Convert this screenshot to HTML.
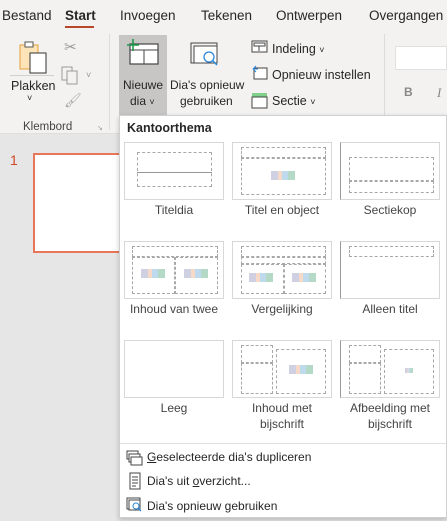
<!DOCTYPE html>
<html><head><meta charset="utf-8"><style>
*{margin:0;padding:0;box-sizing:border-box}
body{width:447px;height:521px;overflow:hidden;background:#e6e6e6;font-family:"Liberation Sans",sans-serif;color:#262626;position:relative;font-size:12px}
.a{position:absolute}
.tab{position:absolute;top:8px;font-size:13.5px;color:#262626}
.ribbon{position:absolute;left:0;top:0;width:447px;height:134px;background:#f3f2f1;border-bottom:1px solid #e1dfdd}
.t{position:absolute;font-size:12px;color:#262626;white-space:nowrap}
.pop{position:absolute;left:119px;top:115px;width:328px;height:403px;background:#fff;border:1px solid #d0d0d0;box-shadow:0 2px 5px rgba(0,0,0,.2)}
.tile{position:absolute;width:100px;height:58px;border:1px solid #d8d8d8;background:#fff}
.d{position:absolute;border:1px dashed #a8a8a8}
.lab{position:absolute;width:108px;text-align:center;font-size:12px;color:#444;line-height:16px}
.mi{position:absolute;left:27px;font-size:12px;color:#262626}
.ic{position:absolute;width:10px;height:6px;background:linear-gradient(90deg,#aac 30%,#eb9 30% 45%,#8bd 45% 70%,#7b9 70%);opacity:.55}
</style></head><body>
<div class="ribbon"></div>
<div class="tab" style="left:2px">Bestand</div>
<div class="tab" style="left:65px;font-weight:bold">Start</div>
<div class="a" style="left:65px;top:26px;width:29px;height:2px;background:#b7472a"></div>
<div class="tab" style="left:120px">Invoegen</div>
<div class="tab" style="left:201px">Tekenen</div>
<div class="tab" style="left:276px">Ontwerpen</div>
<div class="tab" style="left:369px">Overgangen</div>

<svg class="a" style="left:18px;top:40px" width="32" height="34"><rect x="2" y="5" width="18" height="24" fill="#fde3b8" stroke="#e8a040"/><rect x="7" y="2" width="8" height="5" fill="#fff" stroke="#555"/><rect x="12" y="13" width="16" height="20" fill="#fff" stroke="#333"/></svg>
<div class="a" style="left:10px;top:75px;width:44px;height:1px;background:#d0d0d0"></div>
<div class="t" style="left:11px;top:79px;font-size:12.5px">Plakken</div>
<div class="t" style="left:27px;top:93px;font-size:9px">˅</div>
<div class="t" style="left:64px;top:38px;color:#999;font-size:15px">✂</div>
<svg class="a" style="left:61px;top:66px" width="20" height="20"><rect x="1" y="1" width="10" height="13" fill="none" stroke="#999"/><rect x="6" y="5" width="10" height="13" fill="#f3f2f1" stroke="#999"/></svg>
<div class="t" style="left:86px;top:70px;color:#999;font-size:9px">˅</div>
<div class="t" style="left:64px;top:92px;color:#aaa;font-size:14px">🖌</div>
<div class="t" style="left:23px;top:121px;font-size:11.5px;color:#444">Klembord</div>
<div class="t" style="left:97px;top:124px;font-size:7px;color:#999">↘</div>
<div class="a" style="left:109px;top:34px;width:1px;height:96px;background:#dcdcdc"></div>

<div class="a" style="left:119px;top:35px;width:48px;height:80px;background:#c8c6c4"></div>
<svg class="a" style="left:126px;top:38px" width="34" height="28"><rect x="4" y="6" width="28" height="20" fill="#fff" stroke="#444" stroke-width="1.2"/><line x1="4" y1="12" x2="32" y2="12" stroke="#444"/><line x1="18" y1="12" x2="18" y2="26" stroke="#444"/><path d="M7 1v12M1 7h12" stroke="#1e9a4a" stroke-width="1.6"/></svg>
<div class="t" style="left:123px;top:78px;font-size:12px">Nieuwe</div>
<div class="t" style="left:130px;top:94px;font-size:12px">dia <span style="font-size:9px">˅</span></div>
<svg class="a" style="left:190px;top:42px" width="34" height="30"><rect x="1" y="1" width="26" height="20" fill="none" stroke="#444"/><rect x="4" y="4" width="23" height="17" fill="#fff" stroke="#444"/><circle cx="19" cy="15" r="5" fill="#fff" stroke="#2b88d8" stroke-width="1.3"/><line x1="22.5" y1="18.5" x2="27" y2="23" stroke="#2b88d8" stroke-width="1.5"/></svg>
<div class="t" style="left:170px;top:78px;font-size:12px">Dia's opnieuw</div>
<div class="t" style="left:180px;top:94px;font-size:12px">gebruiken</div>
<svg class="a" style="left:251px;top:40px" width="18" height="80"><rect x="1" y="1" width="15" height="11" fill="#fff" stroke="#444"/><rect x="3" y="3" width="11" height="3" fill="none" stroke="#444"/><line x1="8" y1="6" x2="8" y2="11" stroke="#444"/><rect x="3" y="28" width="13" height="11" fill="#fff" stroke="#444"/><path d="M2 29l3-3M2 29l3 3M2 29h5" stroke="#2b88d8" fill="none"/><rect x="1" y="53" width="15" height="4" fill="#7ed08a"/><rect x="1" y="57" width="15" height="11" fill="#fff" stroke="#444"/></svg>
<div class="t" style="left:272px;top:42px;font-size:12.5px">Indeling <span style="font-size:9px">˅</span></div>
<div class="t" style="left:272px;top:68px;font-size:12.5px">Opnieuw instellen</div>
<div class="t" style="left:272px;top:94px;font-size:12.5px">Sectie <span style="font-size:9px">˅</span></div>
<div class="a" style="left:384px;top:34px;width:1px;height:96px;background:#dcdcdc"></div>
<div class="a" style="left:395px;top:46px;width:52px;height:24px;background:#fff;border:1px solid #e0e0e0"></div>
<div class="t" style="left:404px;top:85px;font-weight:bold;color:#888;font-size:12px">B</div>
<div class="t" style="left:437px;top:85px;font-style:italic;color:#888;font-family:'Liberation Serif',serif;font-size:13px">I</div>

<div class="t" style="left:10px;top:152px;color:#d24726;font-size:14px">1</div>
<div class="a" style="left:33px;top:153px;width:100px;height:100px;background:#fff;border:2px solid #e8775a"></div>

<div class="pop">
<div class="t" style="left:7px;top:5px;font-weight:bold;font-size:12.5px">Kantoorthema</div>
<div class="tile" style="left:4px;top:26px"><div class="d" style="left:12px;top:9px;width:75px;height:35px"></div><div class="a" style="left:12px;top:29px;width:75px;height:1px;background:#999"></div></div>
<div class="lab" style="left:0;top:86px">Titeldia</div>
<div class="tile" style="left:112px;top:26px"><div class="d" style="left:8px;top:4px;width:85px;height:11px"></div><div class="d" style="left:8px;top:15px;width:85px;height:37px"></div><div class="ic" style="left:38px;top:28px;width:24px;height:9px"></div></div>
<div class="lab" style="left:108px;top:86px">Titel en object</div>
<div class="tile" style="left:220px;top:26px;border-left-color:#999"><div class="d" style="left:8px;top:14px;width:85px;height:24px"></div><div class="d" style="left:8px;top:38px;width:85px;height:12px"></div></div>
<div class="lab" style="left:216px;top:86px">Sectiekop</div>
<div class="tile" style="left:4px;top:125px"><div class="d" style="left:7px;top:4px;width:86px;height:11px"></div><div class="d" style="left:7px;top:15px;width:43px;height:37px"></div><div class="d" style="left:50px;top:15px;width:43px;height:37px"></div><div class="ic" style="left:16px;top:27px;width:24px;height:9px"></div><div class="ic" style="left:59px;top:27px;width:24px;height:9px"></div></div>
<div class="lab" style="left:0;top:185px">Inhoud van twee</div>
<div class="tile" style="left:112px;top:125px"><div class="d" style="left:8px;top:4px;width:85px;height:11px"></div><div class="d" style="left:8px;top:15px;width:85px;height:7px"></div><div class="d" style="left:8px;top:22px;width:43px;height:30px"></div><div class="d" style="left:51px;top:22px;width:42px;height:30px"></div><div class="ic" style="left:16px;top:31px;width:24px;height:9px"></div><div class="ic" style="left:59px;top:31px;width:24px;height:9px"></div></div>
<div class="lab" style="left:108px;top:185px">Vergelijking</div>
<div class="tile" style="left:220px;top:125px;border-left-color:#999"><div class="d" style="left:8px;top:4px;width:85px;height:11px"></div></div>
<div class="lab" style="left:216px;top:185px">Alleen titel</div>
<div class="tile" style="left:4px;top:224px"></div>
<div class="lab" style="left:0;top:284px">Leeg</div>
<div class="tile" style="left:112px;top:224px"><div class="d" style="left:8px;top:4px;width:32px;height:18px"></div><div class="d" style="left:8px;top:22px;width:32px;height:31px"></div><div class="d" style="left:43px;top:8px;width:50px;height:45px"></div><div class="ic" style="left:56px;top:24px;width:24px;height:9px"></div></div>
<div class="lab" style="left:108px;top:284px">Inhoud met<br>bijschrift</div>
<div class="tile" style="left:220px;top:224px;border-left-color:#999"><div class="d" style="left:8px;top:4px;width:32px;height:18px"></div><div class="d" style="left:8px;top:22px;width:32px;height:31px"></div><div class="d" style="left:43px;top:8px;width:50px;height:45px"></div><div class="ic" style="left:64px;top:27px;width:8px;height:5px"></div></div>
<div class="lab" style="left:216px;top:284px">Afbeelding met<br>bijschrift</div>
<div class="a" style="left:0;top:327px;width:326px;height:1px;background:#e1e1e1"></div>
<svg class="a" style="left:6px;top:334px" width="18" height="16"><rect x="1" y="1" width="11" height="8" fill="none" stroke="#444"/><rect x="3" y="4" width="11" height="8" fill="#fff" stroke="#444"/><rect x="5" y="7" width="11" height="8" fill="#fff" stroke="#444"/></svg>
<div class="mi" style="top:334px"><u>G</u>eselecteerde dia's dupliceren</div>
<svg class="a" style="left:9px;top:356px" width="12" height="18"><rect x="1" y="1" width="10" height="16" fill="#fff" stroke="#444"/><path d="M3 5h6M3 8h6M3 11h6M3 14h4" stroke="#444"/></svg>
<div class="mi" style="top:358px">Dia's uit <u>o</u>verzicht...</div>
<svg class="a" style="left:6px;top:381px" width="18" height="16"><rect x="1" y="1" width="13" height="11" fill="none" stroke="#444"/><rect x="3" y="3" width="11" height="10" fill="#fff" stroke="#444"/><circle cx="10" cy="9" r="3" fill="#fff" stroke="#2b88d8"/><line x1="12" y1="11" x2="15" y2="14" stroke="#2b88d8" stroke-width="1.3"/></svg>
<div class="mi" style="top:383px">Dia's opnieuw gebruiken</div>
</div>
</body></html>
